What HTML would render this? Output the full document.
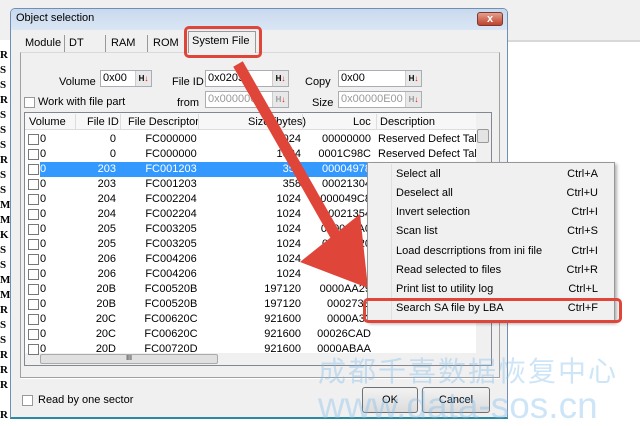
<!DOCTYPE html><html><head><style>
*{margin:0;padding:0;box-sizing:border-box}
body{width:640px;height:425px;overflow:hidden;background:#fff;font-family:"Liberation Sans",sans-serif;font-size:11px;color:#000;position:relative}
.a{position:absolute;white-space:nowrap}
.lt{font-family:"Liberation Serif",serif;font-weight:bold;font-size:11px;left:0}
.inp{background:#fff;border:1px solid #abadb3;height:17px;font-size:11px;padding-left:2px;line-height:15px}
.hb{position:absolute;right:0;top:0;width:16px;height:15px;background:#e8e8e8;border-left:1px solid #ccc;font-size:8px;font-weight:bold;text-align:center;line-height:15px}
.hb b{color:#e00}
.cb{width:11px;height:11px;border:1px solid #777;background:#fff}
.row{position:absolute;left:26px;width:450px;height:15px;line-height:15px}
.row span{position:absolute}
.mi{position:absolute;left:396px;font-size:11px}
.mk{position:absolute;left:560px;width:38px;text-align:right}
</style></head><body>
<div class="a" style="left:0;top:0;width:640px;height:42px;background:#f0f0f0;border-bottom:2px solid #d8d8d8"></div>
<div class="a" style="left:0;top:40px;width:12px;height:385px;background:#fff"></div>
<div class="a lt" style="top:48px;line-height:15px">R<br>S<br>S<br>R<br>S<br>S<br>S<br>R<br>S<br>S<br>M<br>M<br>K<br>S<br>S<br>M<br>M<br>R<br>S<br>S<br>R<br>R<br>R<br><br>R</div>
<div class="a" style="left:10px;top:8px;width:498px;height:411px;background:#f0f0f0;border:1px solid #6f8fb5;border-radius:5px 5px 0 0;border-bottom:2px solid #2b8aa0"></div>
<div class="a" style="left:11px;top:9px;width:496px;height:21px;background:linear-gradient(#c9d9ee,#dae6f4);border-radius:4px 4px 0 0"></div>
<div class="a" style="left:16px;top:12px;font-size:11px">Object selection</div>
<div class="a" style="left:477px;top:12px;width:26px;height:14px;background:linear-gradient(#e2a08e,#c0422c);border:1px solid #7a3a30;border-radius:3px;color:#fff;font-weight:bold;text-align:center;line-height:12px;font-size:11px">x</div>
<div class="a" style="left:20px;top:52px;width:480px;height:326px;border:1px solid #a0a0a0;border-top-color:#d9d9d9;background:#f0f0f0"></div>
<div class="a" style="left:22px;top:35px;font-size:11px;border-right:1px solid #999;padding:2px 3px;height:17px">Module</div>
<div class="a" style="left:66px;top:35px;width:40px;border-right:1px solid #999;padding:2px 3px;height:17px">DT</div>
<div class="a" style="left:108px;top:35px;width:40px;border-right:1px solid #999;padding:2px 3px;height:17px">RAM</div>
<div class="a" style="left:150px;top:35px;width:36px;padding:2px 3px;height:17px">ROM</div>
<div class="a" style="left:188px;top:31px;width:68px;height:22px;background:#f0f0f0;border:1px solid #999;border-bottom:none;padding:3px 3px">System File</div>
<div class="a" style="left:184px;top:26px;width:78px;height:32px;border:3px solid #e0453a;border-radius:5px"></div>
<div class="a" style="left:59px;top:76px">Volume</div>
<div class="a inp" style="left:100px;top:70px;width:52px">0x00<div class="hb">H<b>↓</b></div></div>
<div class="a" style="left:172px;top:76px">File ID</div>
<div class="a inp" style="left:205px;top:70px;width:84px">0x0203<div class="hb">H<b>↓</b></div></div>
<div class="a" style="left:177px;top:97px">from</div>
<div class="a inp" style="left:205px;top:91px;width:84px;color:#999">0x000000<div class="hb">H<b>↓</b></div></div>
<div class="a" style="left:305px;top:76px">Copy</div>
<div class="a inp" style="left:338px;top:70px;width:84px">0x00<div class="hb">H<b>↓</b></div></div>
<div class="a" style="left:312px;top:97px">Size</div>
<div class="a inp" style="left:338px;top:91px;width:84px;color:#999">0x00000E00<div class="hb">H<b>↓</b></div></div>
<div class="a cb" style="left:24px;top:97px;border-color:#999"></div>
<div class="a" style="left:38px;top:96px">Work with file part</div>
<div class="a" style="left:24px;top:112px;width:468px;height:254px;background:#fff;border:1px solid #828790"></div>
<div class="a" style="left:25px;top:113px;width:451px;height:17px;background:#f7f7f7;border-bottom:1px solid #ddd"></div>
<div class="a" style="left:29px;top:116px">Volume</div>
<div class="a" style="left:87px;top:116px">File ID</div>
<div class="a" style="left:128px;top:116px">File Descriptor</div>
<div class="a" style="left:248px;top:116px">Size (bytes)</div>
<div class="a" style="left:353px;top:116px">Loc</div>
<div class="a" style="left:380px;top:116px">Description</div>
<div class="a" style="left:75px;top:114px;width:1px;height:15px;background:#ddd"></div>
<div class="a" style="left:120px;top:114px;width:1px;height:15px;background:#ddd"></div>
<div class="a" style="left:198px;top:114px;width:1px;height:15px;background:#ddd"></div>
<div class="a" style="left:302px;top:114px;width:1px;height:15px;background:#ddd"></div>
<div class="a" style="left:376px;top:114px;width:1px;height:15px;background:#ddd"></div>
<div class="a" style="left:476px;top:113px;width:15px;height:240px;background:#f0f0f0"></div>
<div class="a" style="left:477px;top:129px;width:12px;height:14px;background:#e4e4e4;border:1px solid #999;border-radius:2px"></div>
<div class="a" style="left:25px;top:353px;width:466px;height:12px;background:#f0f0f0"></div>
<div class="a" style="left:40px;top:354px;width:178px;height:10px;background:#e0e0e0;border:1px solid #aaa;border-radius:2px;text-align:center;font-size:7px;line-height:8px">III</div>
<div class="a" style="left:40px;top:162px;width:436px;height:15px;background:#3399ff"></div>
<div id="rows"></div>
<script>
var d=[["0","FC000000","1024","00000000","Reserved Defect Tabl"],["0","FC000000","1024","0001C98C","Reserved Defect Tabl"],["203","FC001203","358","00004978",""],["203","FC001203","358","00021304",""],["204","FC002204","1024","000049C8",""],["204","FC002204","1024","00021354",""],["205","FC003205","1024","000049A0",""],["205","FC003205","1024","00021320",""],["206","FC004206","1024","",""],["206","FC004206","1024","",""],["20B","FC00520B","197120","0000AA29",""],["20B","FC00520B","197120","000273B",""],["20C","FC00620C","921600","0000A32",""],["20C","FC00620C","921600","00026CAD",""],["20D","FC00720D","921600","0000ABAA",""]];
var h="";d.forEach(function(r,i){var y=132+i*15;var c=i==2?"color:#fff;":"";
h+='<div class="row" style="top:'+y+'px;'+c+'"><span class="cb" style="left:2px;top:2px"></span><span style="left:14px">0</span><span style="left:50px;width:40px;text-align:right">'+r[0]+'</span><span style="left:95px;width:100px;text-align:center">'+r[1]+'</span><span style="left:230px;width:45px;text-align:right">'+r[2]+'</span><span style="left:280px;width:65px;text-align:right">'+r[3]+'</span><span style="left:352px;overflow:hidden;width:98px;white-space:nowrap">'+r[4]+'</span></div>';});
document.getElementById("rows").innerHTML=h;
</script>
<div class="a" style="left:20px;top:378px;width:480px;height:1px;background:#fff"></div>
<div class="a cb" style="left:22px;top:395px;border-color:#999"></div>
<div class="a" style="left:38px;top:394px">Read by one sector</div>
<div class="a" style="left:362px;top:387px;width:56px;height:26px;border:1px solid #707070;border-radius:3px;background:linear-gradient(#f2f2f2,#dcdcdc);text-align:center;line-height:24px">OK</div>
<div class="a" style="left:422px;top:387px;width:68px;height:26px;border:1px solid #707070;border-radius:3px;background:linear-gradient(#f2f2f2,#dcdcdc);text-align:center;line-height:24px">Cancel</div>
<svg class="a" style="left:0;top:0" width="640" height="425"><line x1="238" y1="64" x2="338" y2="240" stroke="#e0453a" stroke-width="11"/><polygon points="300,262 368,288 360,214" fill="#e0453a"/></svg>
<div class="a" style="left:367px;top:162px;width:248px;height:160px;background:#f0f0f0;border:1px solid #979797;box-shadow:2px 2px 3px rgba(0,0,0,.3)"></div>
<div class="a" style="left:391px;top:164px;width:1px;height:156px;background:#e0e0e0"></div>
<div class="a mi" style="top:168px">Select all</div><div class="a mk" style="top:168px">Ctrl+A</div>
<div class="a mi" style="top:187px">Deselect all</div><div class="a mk" style="top:187px">Ctrl+U</div>
<div class="a mi" style="top:206px">Invert selection</div><div class="a mk" style="top:206px">Ctrl+I</div>
<div class="a mi" style="top:225px">Scan list</div><div class="a mk" style="top:225px">Ctrl+S</div>
<div class="a mi" style="top:245px">Load descrriptions from ini file</div><div class="a mk" style="top:245px">Ctrl+I</div>
<div class="a mi" style="top:264px">Read selected to files</div><div class="a mk" style="top:264px">Ctrl+R</div>
<div class="a mi" style="top:283px">Print list to utility log</div><div class="a mk" style="top:283px">Ctrl+L</div>
<div class="a mi" style="top:302px">Search SA file by LBA</div><div class="a mk" style="top:302px">Ctrl+F</div>
<div class="a" style="left:363px;top:298px;width:259px;height:25px;border:3px solid #e0453a;border-radius:5px"></div>
<div class="a" style="left:318px;top:353px;font-family:'Noto Sans CJK SC',sans-serif;font-size:28px;color:rgba(130,190,235,.4);letter-spacing:2px;line-height:34px">成都千喜数据恢复中心</div>
<div class="a" style="left:318px;top:387px;font-size:37px;color:rgba(130,190,235,.4);line-height:38px">www.data-sos.cn</div>
</body></html>
